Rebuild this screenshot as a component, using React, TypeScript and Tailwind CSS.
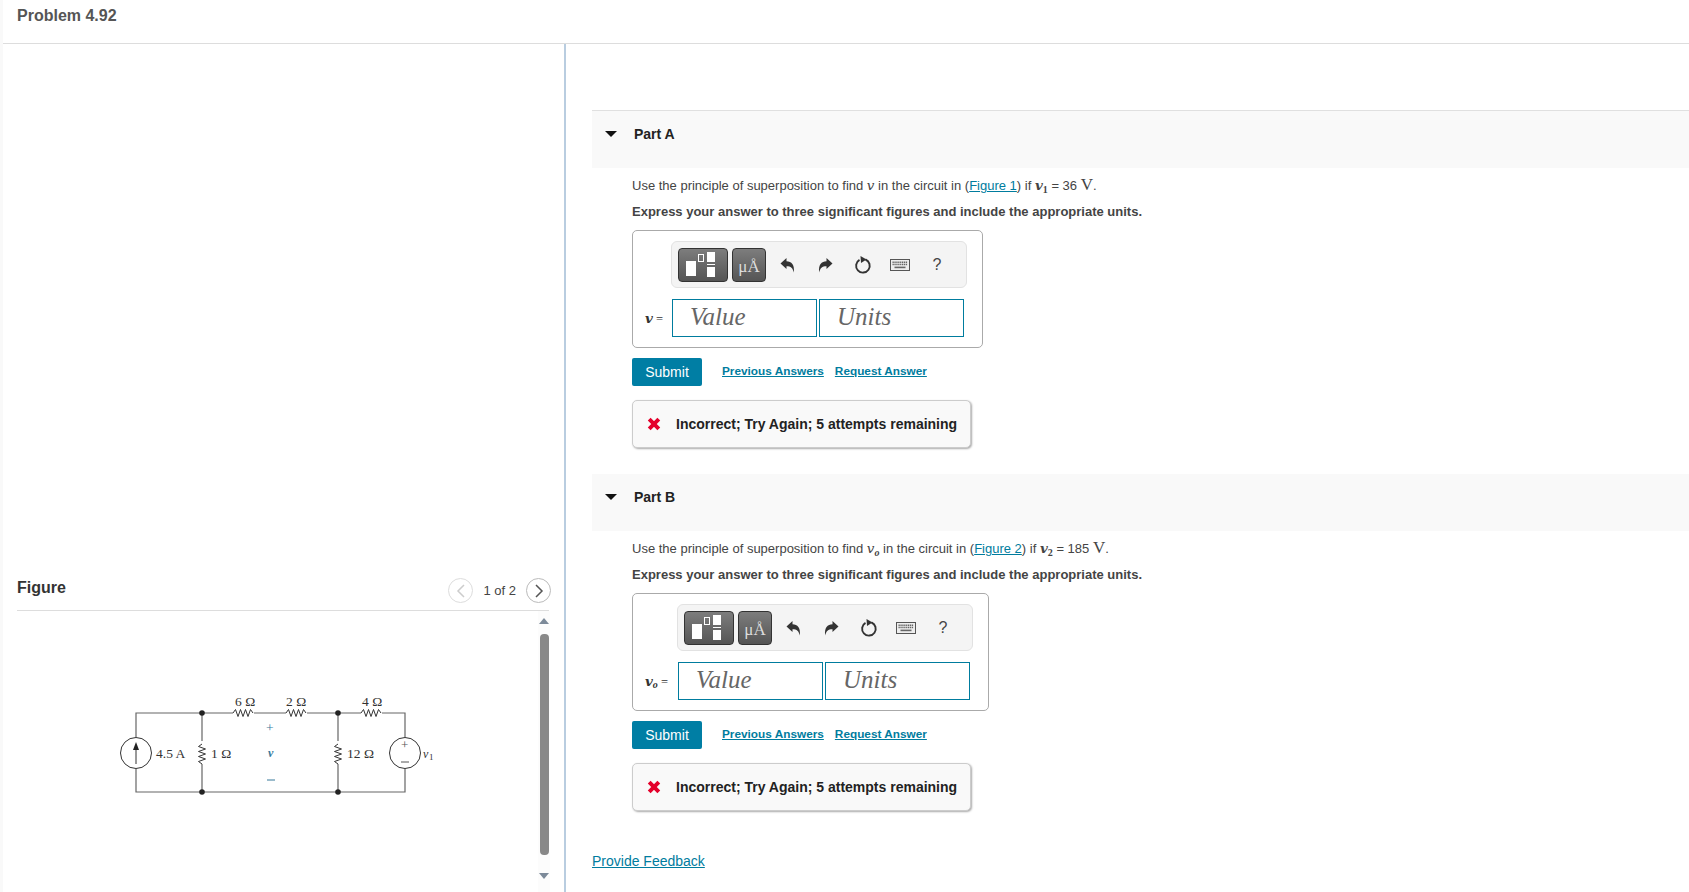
import React from "react";

const serif = "font-['Liberation_Serif',serif]";

function TemplateIcon() {
  return (
    <svg width="48" height="32" viewBox="0 0 48 32">
      <rect x="7" y="12" width="10" height="15" fill="#fff" />
      <rect x="19.5" y="5.5" width="5" height="7" fill="none" stroke="#fff" strokeWidth="1" />
      <rect x="28" y="3" width="8" height="10" fill="#fff" />
      <rect x="28" y="15" width="8" height="1" fill="#fff" />
      <rect x="28" y="18" width="8" height="10" fill="#fff" />
    </svg>
  );
}

function Undo({ flip }: { flip?: boolean }) {
  return (
    <svg width="15" height="16" viewBox="0 0 15 16" className={flip ? "-scale-x-100" : ""}>
      <path d="M0.5 6.5 L6.5 1 V4.2 C11.5 4.2 14.8 7.5 13.8 15.5 C12.8 11 11 9.2 6.5 9.2 V12 Z" fill="#333" />
    </svg>
  );
}

function Reset() {
  return (
    <svg width="18" height="18" viewBox="0 0 18 18" fill="none">
      <path d="M11.5 3.5 A6.8 6.8 0 1 1 5.5 3.9" stroke="#333" strokeWidth="1.9" />
      <path d="M6.5 0 L12.5 3.4 L7 7 Z" fill="#333" />
    </svg>
  );
}

function Keyboard() {
  const keys: React.ReactElement[] = [];
  for (let r = 0; r < 2; r++) {
    for (let c = 0; c < 8; c++) {
      keys.push(<rect key={`${r}-${c}`} x={2.5 + c * 1.9} y={2.5 + r * 2.2} width="1.3" height="1.5" fill="#666" />);
    }
  }
  return (
    <svg width="20" height="12" viewBox="0 0 20 12">
      <rect x="0.5" y="0.5" width="19" height="11" fill="#eee" stroke="#555" />
      {keys}
      <rect x="4.5" y="7.6" width="11" height="1.6" fill="#666" />
    </svg>
  );
}

function XMark() {
  return (
    <svg width="14" height="14" viewBox="0 0 14 14">
      <path d="M2.2 2.2 L11.8 11.8 M11.8 2.2 L2.2 11.8" stroke="#e4002b" strokeWidth="4" />
    </svg>
  );
}

function Caret() {
  return (
    <svg width="12" height="6" viewBox="0 0 12 6">
      <path d="M0 0 H12 L6 6 Z" fill="#111" />
    </svg>
  );
}

function MathV({ bold }: { bold?: boolean }) {
  return <i className={`font-['DejaVu_Serif',serif] text-[13.5px] ${bold ? "font-bold" : "font-normal"}`}>v</i>;
}

function Part({
  name,
  figure,
  variable,
  sub,
  given,
  value,
  labelWidth,
  headerH,
  gap,
  border,
}: {
  name: string;
  figure: string;
  variable: React.ReactNode;
  sub: string;
  given: string;
  value: string;
  labelWidth: string;
  headerH: string;
  gap: string;
  border: string;
}) {
  return (
    <section className={gap}>
      <div className={`${headerH} flex items-start bg-[#f9f9f9] ${border}`}>
        <div className="w-[42px] pl-[13px] pt-[20px]">
          <Caret />
        </div>
        <div className="pt-[13px] text-[14px] leading-[20px] font-bold text-[#222]">{name}</div>
      </div>
      <div className="pl-[40px]">
        <p className="mt-[5px] h-[24px] text-[13px] leading-[24px] text-[#444] whitespace-nowrap">
          Use the principle of superposition to find {variable} in the circuit in (
          <a className="text-[#007c9e] underline">{figure}</a>) if <MathV bold />
          <sub className={`${serif} font-bold text-[10px]`}>{sub}</sub> = {given} <span className={`${serif} text-[17px]`}>V</span>.
        </p>
        <p className="mt-[3px] h-[24px] text-[13px] leading-[24px] font-bold text-[#444] whitespace-nowrap">
          Express your answer to three significant figures and include the appropriate units.
        </p>
        <div className="mt-[6px] inline-block rounded-[5px] border border-[#aaa] pr-[15px] pt-[10px] pb-[10px]">
          <div className="flex items-center">
            <div className={`${labelWidth} shrink-0`} />
            <div className="w-[296px] h-[47px] rounded-[6px] border border-[#e2e2e2] bg-[#f4f4f4] flex items-center pl-[6px]">
              <div className="w-[50px] h-[34px] rounded-[4px] border border-[#333] bg-gradient-to-b from-[#7d7d7d] to-[#555]">
                <TemplateIcon />
              </div>
              <div className={`ml-[4px] w-[34px] h-[34px] rounded-[4px] border border-[#333] bg-gradient-to-b from-[#7d7d7d] to-[#555] text-center text-[17px] leading-[36px] text-[#ddd] ${serif}`}>
                μÅ
              </div>
              <div className="ml-[3px] w-[37.5px] flex justify-center"><Undo /></div>
              <div className="w-[37.5px] flex justify-center"><Undo flip /></div>
              <div className="w-[37.5px] flex justify-center"><Reset /></div>
              <div className="w-[37px] flex justify-center"><Keyboard /></div>
              <div className="w-[37px] text-center text-[16px] text-[#444]">?</div>
            </div>
          </div>
          <div className="flex items-center mt-[11px]">
            <div className={`${labelWidth} shrink-0 pl-[12px] text-[12.5px] whitespace-nowrap text-[#333] ${serif}`}>
              {value === "o" ? (
                <>
                  <MathV bold />
                  <sub className="italic font-bold text-[10px]">o</sub> =
                </>
              ) : (
                <>
                  <MathV bold /> =
                </>
              )}
            </div>
            <div className={`ml-px w-[145px] h-[38px] border border-[#007c9e] pl-[17px] text-[25px] leading-[34px] italic text-[#666] ${serif}`}>Value</div>
            <div className={`ml-[2px] w-[145px] h-[38px] border border-[#007c9e] pl-[17px] text-[25px] leading-[34px] italic text-[#666] ${serif}`}>Units</div>
          </div>
        </div>
        <div className="mt-[10px] flex items-center h-[28px]">
          <div className="w-[70px] h-[28px] rounded-[2px] bg-[#007ea4] text-white text-[14px] leading-[28px] text-center">Submit</div>
          <a className="ml-[20px] text-[11.8px] font-bold text-[#007c9e] underline">Previous Answers</a>
          <a className="ml-[11px] text-[11.8px] font-bold text-[#007c9e] underline">Request Answer</a>
        </div>
        <div className="mt-[14px] w-[339px] h-[48px] rounded-[5px] border border-[#ccc] bg-[#f9f9f9] shadow-[1px_1px_2px_#aaa] flex items-center pl-[14px]">
          <XMark />
          <span className="ml-[15px] text-[14px] font-bold text-[#222] whitespace-nowrap">Incorrect; Try Again; 5 attempts remaining</span>
        </div>
      </div>
    </section>
  );
}

function Resistor({ x, y, vertical }: { x: number; y: number; vertical?: boolean }) {
  const pts = [0, 2.5, 5, 7.5, 10, 12.5, 15, 17.5, 20];
  const z = [0, -3.5, 3.5, -3.5, 3.5, -3.5, 3.5, -3.5, 0];
  const d = pts
    .map((p, i) => (vertical ? `${x + z[i]},${y + p}` : `${x + p},${y + z[i]}`))
    .join(" ");
  return <polyline points={d} fill="none" stroke="#333" strokeWidth="1" />;
}

function Circuit() {
  const w = "#666";
  const label = { fontFamily: "Liberation Serif, serif", fontSize: 13.5, fill: "#333" };
  return (
    <svg width="350" height="140" viewBox="100 670 350 140">
      <path d="M136 737 V713 H233 M254 713 H286 M307 713 H361 M382 713 H405 V737 M405 769 V792 H136 V769" fill="none" stroke={w} strokeWidth="1.2" />
      <path d="M202 713 V741 M202 764 V792 M338 713 V741 M338 764 V792" fill="none" stroke={w} strokeWidth="1.2" />
      <Resistor x={233} y={713} />
      <Resistor x={286} y={713} />
      <Resistor x={361} y={713} />
      <Resistor x={202} y={744} vertical />
      <Resistor x={338} y={744} vertical />
      <circle cx="202" cy="713" r="2.8" fill="#222" />
      <circle cx="338" cy="713" r="2.8" fill="#222" />
      <circle cx="202" cy="792" r="2.8" fill="#222" />
      <circle cx="338" cy="792" r="2.8" fill="#222" />
      <circle cx="136" cy="753" r="15.5" fill="none" stroke="#333" strokeWidth="1" />
      <path d="M136 764 V748" stroke="#333" strokeWidth="1" />
      <path d="M133 750 L136 742 L139 750 Z" fill="#222" />
      <circle cx="405" cy="753" r="15.5" fill="none" stroke="#333" strokeWidth="1" />
      <text x="401" y="749" style={{ ...label, fontSize: 13, fill: "#555" }}>+</text>
      <path d="M401 762 H409" stroke="#555" strokeWidth="1" />
      <text x="235" y="706" style={label}>6 Ω</text>
      <text x="286" y="706" style={label}>2 Ω</text>
      <text x="362" y="706" style={label}>4 Ω</text>
      <text x="156" y="758" style={label}>4.5 A</text>
      <text x="211" y="758" style={label}>1 Ω</text>
      <text x="347" y="758" style={label}>12 Ω</text>
      <text x="423" y="758" style={{ ...label, fontSize: 12, fontStyle: "italic" }}>v</text>
      <text x="429" y="760" style={{ ...label, fontSize: 9 }}>1</text>
      <text x="266" y="732" style={{ ...label, fill: "#37799a" }}>+</text>
      <text x="268" y="757" style={{ ...label, fontStyle: "italic", fontWeight: 700, fontSize: 12, fill: "#37799a" }}>v</text>
      <path d="M267 780 H275" stroke="#37799a" strokeWidth="1" />
    </svg>
  );
}

function Nav({ dir, light }: { dir: "l" | "r"; light?: boolean }) {
  const color = light ? "#ccc" : "#555";
  return (
    <div className={`w-[25px] h-[25px] rounded-full border ${light ? "border-[#ddd]" : "border-[#bbb]"} flex items-center justify-center`}>
      <svg width="10" height="14" viewBox="0 0 10 14" fill="none">
        <path d={dir === "l" ? "M8 1 L2 7 L8 13" : "M2 1 L8 7 L2 13"} stroke={color} strokeWidth="1.5" />
      </svg>
    </div>
  );
}

export default function App() {
  return (
    <div className="w-[1689px] h-[892px] overflow-hidden bg-[#f9f9f9] pl-[3px] font-['Liberation_Sans',Arial,sans-serif]">
      <div className="h-full bg-white flex flex-col">
        <header className="h-[44px] shrink-0 border-b border-[#ddd] pl-[14px] pt-[6px] text-[16px] leading-[20px] font-bold text-[#555]">
          Problem 4.92
        </header>
        <div className="flex-1 flex min-h-0">
          <aside className="w-[563px] shrink-0 border-r-2 border-[#b9cde0] pl-[14px] flex flex-col">
            <div className="flex-1" />
            <div className="h-[44px] mr-[15px] shrink-0 border-b border-[#ddd] flex items-start justify-between">
              <div className="pt-[11px] text-[16px] leading-[20px] font-bold text-[#333]">Figure</div>
              <div className="flex items-center pt-[11px] -mr-[2px]">
                <Nav dir="l" light />
                <span className="mx-[10px] text-[13px] text-[#444]">1 of 2</span>
                <Nav dir="r" />
              </div>
            </div>
            <div className="h-[281px] shrink-0 flex justify-between mr-[15px]">
              <div className="pl-[83px] pt-[59px]">
                <Circuit />
              </div>
              <div className="w-[12px] -mr-[1px] bg-[#fcfcfc] flex flex-col items-center pt-[7px] pb-[13px]">
                <svg width="10" height="6" viewBox="0 0 10 6"><path d="M5 0 L10 6 H0 Z" fill="#7c8a99" /></svg>
                <div className="mt-[10px] w-[9px] flex-1 rounded-[4px] bg-[#888]" />
                <svg className="mt-[18px]" width="10" height="6" viewBox="0 0 10 6"><path d="M0 0 H10 L5 6 Z" fill="#7c8a99" /></svg>
              </div>
            </div>
          </aside>
          <main className="flex-1 pl-[26px] pt-[66px] min-w-0">
            <Part name="Part A" figure="Figure 1" variable={<MathV />} sub="1" given="36" value="" labelWidth="w-[38px]" headerH="h-[58px]" gap="" border="border-t border-[#e0e0e0]" />
            <Part name="Part B" figure="Figure 2" variable={<><MathV /><sub className={`${serif} italic font-bold text-[10px]`}>o</sub></>} sub="2" given="185" value="o" labelWidth="w-[44px]" headerH="h-[57px]" gap="mt-[26px]" border="" />
            <a className="block mt-[40px] text-[14px] text-[#007c9e] underline">Provide Feedback</a>
          </main>
        </div>
      </div>
    </div>
  );
}
